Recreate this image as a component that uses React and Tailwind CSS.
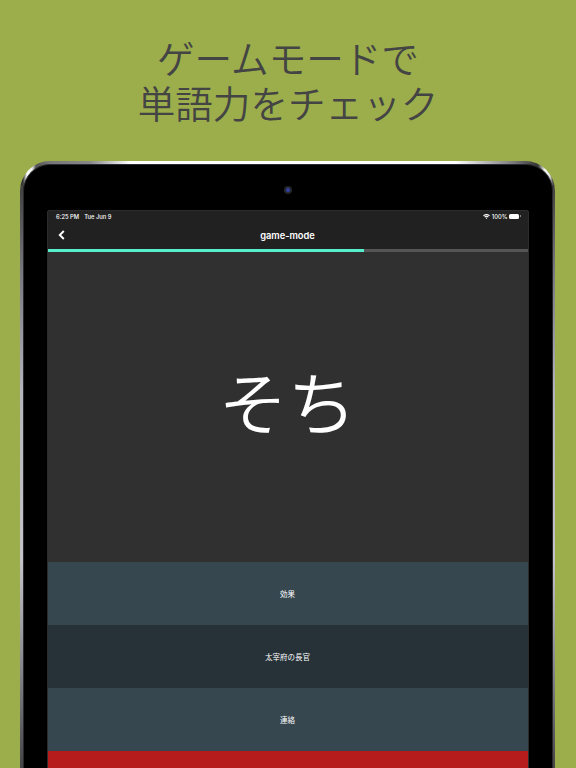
const choices = [
  { label: '効果', className: 'bg-[#37474f]' },
  { label: '太宰府の長官', className: 'bg-[#263238]' },
  { label: '連絡', className: 'bg-[#37474f]' },
  { label: '', className: 'bg-[#b71c1c]' },
]

function WifiIcon() {
  return (
    <svg width="7" height="5" viewBox="0 0 14 10" fill="none" stroke="white" strokeWidth="2.4">
      <path d="M1 3.6a8.6 8.6 0 0 1 12 0M3.4 6.2a5.2 5.2 0 0 1 7.2 0" />
      <path d="M5.2 7.8a2.6 2.6 0 0 1 3.6 0L7 9.8z" fill="white" stroke="none" />
    </svg>
  )
}

function StatusBar() {
  return (
    <div className="flex h-[11px] items-center justify-between pr-[7px] pl-[8.5px] text-[5.8px] leading-none font-medium">
      <div className="flex gap-[5px]">
        <span>6:25 PM</span>
        <span>Tue Jun 9</span>
      </div>
      <div className="flex items-center gap-[1.5px]">
        <WifiIcon />
        <span>100%</span>
        <div className="flex items-center gap-[0.5px]">
          <div className="h-[5px] w-[10px] rounded-[1.5px] bg-white" />
          <div className="h-[2px] w-[1px] bg-[#888]" />
        </div>
      </div>
    </div>
  )
}

function NavBar() {
  return (
    <div className="grid h-[26.5px] grid-cols-[1fr_auto_1fr] items-center px-[10px]">
      <svg width="7" height="10" viewBox="0 0 7 10" fill="none" stroke="white" strokeWidth="1.9">
        <path d="M5.8 1 1.8 5l4 4" />
      </svg>
      <h1 className="pt-[1.5px] text-[9.3px] font-semibold">game-mode</h1>
    </div>
  )
}

export default function App() {
  return (
    <div className="flex h-[768px] w-[576px] flex-col overflow-hidden bg-[#9bae4b] font-['Inter','Noto_Sans_CJK_JP',sans-serif]">
      <h2 className="h-[161px] shrink-0 pt-[37px] text-center text-[37.6px] leading-[45px] font-[350] text-[#444]">
        ゲームモードで
        <br />
        単語力をチェック
      </h2>

      {/* metal rim: horizontal shine on the top edge, vertical shine down the sides */}
      <div className="ml-[20px] h-[800px] w-[535px] shrink-0 rounded-t-[30px] bg-[linear-gradient(to_right,#333_0,#333_3px,#fff_7px,#eee_12px,#555_16px,#777_30px,#888_70px,#fff_110px,#fff_435px,#777_495px,#333_518px,#fff_525px,#ddd_530px,#444_533px),linear-gradient(to_bottom,#444_30px,#77777f_110px,#b4b4bc_230px,#c4c4c8_400px,#8a8a92_500px,#55555b_580px,#444_610px)] bg-[length:100%_24px,100%_100%] bg-no-repeat px-[2.5px] pt-[2.5px]">
        <div className="flex h-full flex-col items-center rounded-t-[27px] border-x border-t border-[#2a2a2c] bg-black">
          <div className="flex h-[45.5px] w-full shrink-0 justify-center pt-[21.5px]">
            <div className="flex size-[8px] items-center justify-center rounded-full bg-[#24262c]">
              <div className="size-[4px] rounded-full bg-[#353fa8]" />
            </div>
          </div>

          <div className="flex w-[482px] grow flex-col rounded-t-[2px] border border-[#2c2c2c] bg-[#212121] text-white">
            <StatusBar />
            <NavBar />
            <div className="h-[3px] shrink-0 bg-[#555]">
              <div className="h-full w-[66%] bg-[#55efcb]" />
            </div>
            <div className="flex h-[310.4px] shrink-0 items-center justify-center bg-[#303030] pb-[2px] text-[69px] leading-none font-[350]">そち</div>
            {choices.map((c, i) => (
              <div key={i} className={`flex h-[63px] shrink-0 items-center justify-center pt-[2px] text-[7.5px] ${c.className}`}>
                {c.label}
              </div>
            ))}
          </div>
        </div>
      </div>
    </div>
  )
}
